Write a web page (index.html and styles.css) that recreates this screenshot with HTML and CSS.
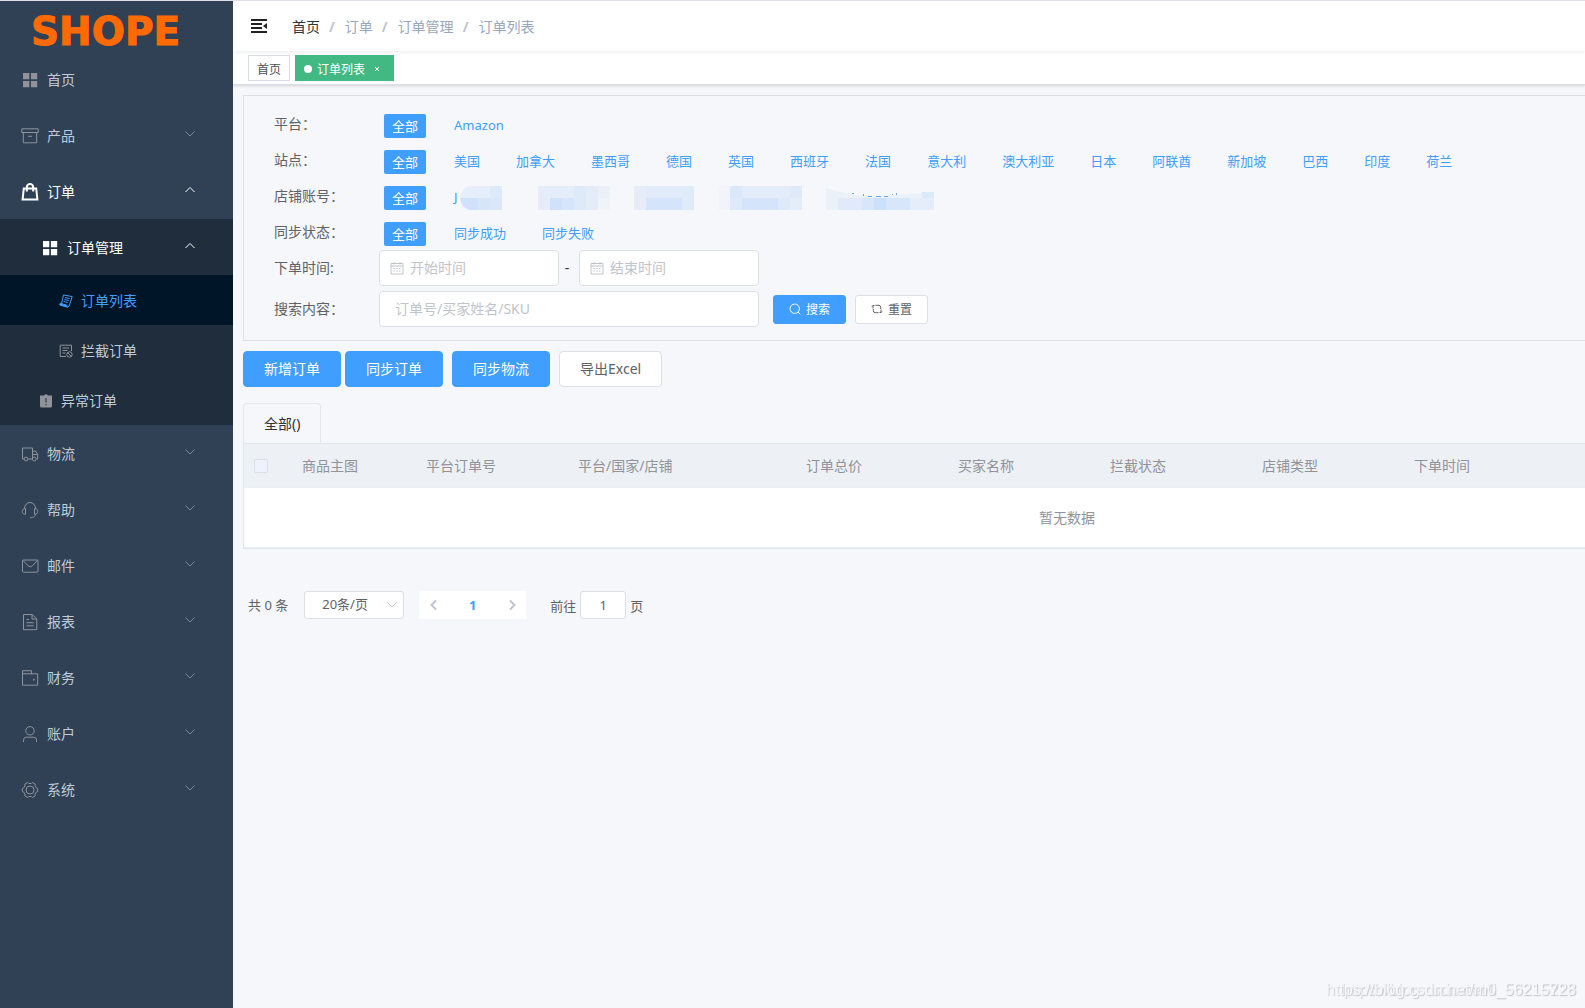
FILE: index.html
```html
<!DOCTYPE html>
<html lang="zh-CN">
<head>
    <meta charset="UTF-8">
    <meta name="viewport" content="width=device-width, initial-scale=1.0">
    <title>订单列表</title>
    <link rel="stylesheet" href="styles.css">
</head>
<body>
    <!-- shared icons -->
    <svg class="sprite" aria-hidden="true">
        <symbol id="down" viewBox="0 0 12 12"><path d="M1.5 3.5 6 8l4.500-4.500"/></symbol>
        <symbol id="up" viewBox="0 0 12 12"><path d="M1.500 8 6 3.500 10.500 8"/></symbol>
        <symbol id="grid" viewBox="0 0 18 18"><path class="solid" d="M2 2h6.300v6.300H2zM9.900 2h6.300v6.300H9.900zM2 9.900h6.300v6.300H2zM9.900 9.900h6.300v6.300H9.900z"/></symbol>
        <symbol id="date" viewBox="0 0 14 14"><path d="M1 2.500h12v10.500H1zM1 5h12M4 1v2.500M10 1v2.500M3.500 7.500h1.500M6.300 7.500h1.500M9 7.500h1.500M3.500 10h1.500M6.300 10h1.500M9 10h1.500"/></symbol>
    </svg>

    <div class="app">
        <aside class="sidebar">
            <a class="logo" href="#">SHOPE</a>
            <nav class="menu">
                <a class="menu-item" href="#"><svg class="icon"><use href="#grid"/></svg>首页</a>
                <button class="menu-item" type="button">
                    <svg class="icon" viewBox="0 0 18 18"><path d="M.8 1.800h16.400v3.700H.8zM2.300 5.500v10.300h13.400V5.500M7 9.300h4"/></svg>产品
                    <svg class="arrow"><use href="#down"/></svg>
                </button>
                <button class="menu-item opened" type="button">
                    <svg class="icon bag" viewBox="0 0 18 18"><path d="M2.800 5.500h12.400l1.200 11H1.600zM5.800 8.500V4.200a3.200 3.200 0 0 1 6.400 0v4.300"/></svg>订单
                    <svg class="arrow"><use href="#up"/></svg>
                </button>
                <div class="submenu">
                    <button class="menu-item opened level-2" type="button">
                        <svg class="icon"><use href="#grid"/></svg>订单管理
                        <svg class="arrow"><use href="#up"/></svg>
                    </button>
                    <a class="menu-item level-3 active" href="#">
                        <svg class="icon small" viewBox="0 0 14 14"><path d="m4.500 1 8.700 1.500-3 9.500-1.800 1.200L.8 11l.5-1.700 1.200.3zM2.500 9.600l5.800 1.800M6 3.500l4.500 1M5.300 5.500l4.500 1M4.600 7.500l4 1"/><path class="solid" d="m.8 9.300 7.500 2.200.1 1.700L.8 11z"/></svg>订单列表
                    </a>
                    <a class="menu-item level-3" href="#">
                        <svg class="icon small" viewBox="0 0 14 14"><path d="M7 12.500H1.200V1.200h11.300v6M3.500 4h6.500M3.500 6.500h5M3.500 9h3"/><circle cx="10.500" cy="10.500" r="2.700"/><path d="m8.600 8.600 3.800 3.800"/></svg>拦截订单
                    </a>
                    <a class="menu-item level-2b" href="#">
                        <svg class="icon small" viewBox="0 0 14 14"><path class="solid" d="M5 1.500Q7-.8 9 1.500h4V12q0 1.500-1.500 1.500h-9Q1 13.500 1 12V1.500z"/><path class="mark" d="M7 4v4.500M7 10v1.300"/></svg>异常订单
                    </a>
                </div>
                <button class="menu-item" type="button">
                    <svg class="icon" viewBox="0 0 18 18"><path d="M3.200 14H1.500V3h10v11H7M11.500 6.200h3.200l2 3.300V14h-1M11.500 9.500h5"/><circle cx="5" cy="14" r="1.900"/><circle cx="13.300" cy="14" r="1.900"/></svg>物流
                    <svg class="arrow"><use href="#down"/></svg>
                </button>
                <button class="menu-item" type="button">
                    <svg class="icon" viewBox="0 0 18 18"><path d="M3.500 7.500a5.500 6 0 0 1 11 0M4.500 7.500v5.800C2.500 13.500 1.300 12.200 1.300 10.400S2.500 7.300 4.500 7.500zM13.500 7.500v5.800c2 .2 3.200-1.100 3.200-2.900s-1.200-3.100-3.200-2.900zM14.500 13c0 2-1.500 3.700-5.500 3.700"/></svg>帮助
                    <svg class="arrow"><use href="#down"/></svg>
                </button>
                <button class="menu-item" type="button">
                    <svg class="icon" viewBox="0 0 18 18"><rect x="1.500" y="3" width="15.500" height="12.200" rx="1"/><path d="M2 3.500 7.300 9q1.900 1.700 3.900 0l5.300-5.500"/></svg>邮件
                    <svg class="arrow"><use href="#down"/></svg>
                </button>
                <button class="menu-item" type="button">
                    <svg class="icon" viewBox="0 0 18 18"><path d="M2.500 1.500h8.700L15.800 6v10.700H2.500zM11 1.500V6h4.800M5.500 6.500H8M5.500 9.700h7.200M5.500 12.800h7.200"/></svg>报表
                    <svg class="arrow"><use href="#down"/></svg>
                </button>
                <button class="menu-item" type="button">
                    <svg class="icon" viewBox="0 0 18 18"><path d="M1.500 4.800h15.200v11.400H1.500V1.700h9v3.100M12.800 9.700v2M12 10.700h1.600"/></svg>财务
                    <svg class="arrow"><use href="#down"/></svg>
                </button>
                <button class="menu-item" type="button">
                    <svg class="icon" viewBox="0 0 18 18"><circle cx="9" cy="5.800" r="4.200"/><path d="M2.500 17v-1.800q0-3 3-3h7q3 0 3 3V17"/></svg>账户
                    <svg class="arrow"><use href="#down"/></svg>
                </button>
                <button class="menu-item" type="button">
                    <svg class="icon" viewBox="0 0 18 18"><path d="m6.700 1.500 1 1h2.600l1-1 3 1.700-.3 1.600 1.200 2 1.500.7v3l-1.500.7-1.200 2 .3 1.600-3 1.700-1-1H7.700l-1 1-3-1.700.3-1.600-1.200-2-1.500-.7v-3l1.500-.7L4 4.800l-.3-1.600z"/><circle cx="9" cy="9" r="4"/></svg>系统
                    <svg class="arrow"><use href="#down"/></svg>
                </button>
            </nav>
        </aside>

        <div class="main">
            <header class="navbar">
                <button class="hamburger" type="button" aria-label="收起菜单">
                    <svg viewBox="0 0 16 14"><path d="M0 1h16M0 5h11M0 9h11M0 13h16"/><path class="solid" d="m16 4v6l-4-3z"/></svg>
                </button>
                <nav class="breadcrumb">
                    <a href="#">首页</a><i>/</i><span>订单</span><i>/</i><span>订单管理</span><i>/</i><span>订单列表</span>
                </nav>
            </header>
            <div class="tags-view">
                <a class="view" href="#">首页</a>
                <a class="view current" href="#"><span class="dot"></span>订单列表<svg class="close" viewBox="0 0 6 6"><path d="m1 1 4 4M5 1 1 5"/></svg></a>
            </div>

            <main class="content">
                <form class="filter">
                    <div class="row">
                        <span class="label">平台：</span>
                        <div class="options"><button class="on" type="button">全部</button><a href="#">Amazon</a></div>
                    </div>
                    <div class="row">
                        <span class="label">站点：</span>
                        <div class="options">
                            <button class="on" type="button">全部</button>
                            <a href="#">美国</a>
                            <a href="#">加拿大</a>
                            <a href="#">墨西哥</a>
                            <a href="#">德国</a>
                            <a href="#">英国</a>
                            <a href="#">西班牙</a>
                            <a href="#">法国</a>
                            <a href="#">意大利</a>
                            <a href="#">澳大利亚</a>
                            <a href="#">日本</a>
                            <a href="#">阿联酋</a>
                            <a href="#">新加坡</a>
                            <a href="#">巴西</a>
                            <a href="#">印度</a>
                            <a href="#">荷兰</a>
                        </div>
                    </div>
                    <div class="row">
                        <span class="label">店铺账号：</span>
                        <div class="options shops">
                            <button class="on" type="button">全部</button>
                            <a class="named" href="#">J<svg width="42" height="24"><path fill="#e5eefa" d="M10 0h20v12H0Q2 2 10 0z"/><path fill="#dceaf9" d="M30 0h12v12H30z"/><path fill="#d0e2fb" d="M0 12h18v12H9Q1 21 0 12z"/><path fill="#d6e6f9" d="M18 12h12v12H18z"/><path fill="#dae7fa" d="M30 12h12v12H30z"/></svg></a>
                            <a href="#" aria-label="店铺2"><svg width="72" height="24"><path fill="#e4edf9" d="M0 0h36v12H0zM0 12h12v12H0z"/><path fill="#dceaf9" d="M36 0h12v12H36zM36 12h12v12H36z"/><path fill="#e4ecf9" d="M48 0h12v24H48z"/><path fill="#ebf0f9" d="M60 0h12v12H60z"/><path fill="#cfe2fc" d="M12 12h12v12H12z"/><path fill="#d6e5fb" d="M24 12h12v12H24z"/><path fill="#f0f4f9" d="M60 12h12v12H60z"/></svg></a>
                            <a href="#" aria-label="店铺3"><svg width="60" height="24"><path fill="#e6edf9" d="M0 0h12v24H0z"/><path fill="#e1ebf9" d="M12 0h36v12H12z"/><path fill="#deebf9" d="M48 0h12v24H48z"/><path fill="#d4e4fb" d="M12 12h36v12H12z"/></svg></a>
                            <a href="#" aria-label="店铺4"><svg width="84" height="24"><path fill="#f1f4fa" d="M0 0h12v24H0z"/><path fill="#d9e9fa" d="M12 0h12v12H12z"/><path fill="#e4ecf9" d="M24 0h48v12H24z"/><path fill="#deeafa" d="M72 0h12v12H72zM12 12h12v12H12zM60 12h12v12H60z"/><path fill="#d4e4fa" d="M24 12h36v12H24z"/><path fill="#e5edf9" d="M72 12h12v12H72z"/></svg></a>
                            <a href="#" aria-label="店铺5"><svg width="108" height="24"><path fill="#ebf1f9" d="M0 2q40 12 70 7l38-3v18H0z"/><path fill="#e0eafa" d="M12 12h24v12H12z"/><path fill="#d7e6fa" d="M36 12h12v12H36zM60 12h24v12H60z"/><path fill="#cbe0fb" d="M48 12h12v12H48z"/><path fill="#e4edf9" d="M84 12h24v12H84z"/><path fill="#d9eaf9" d="M96 6h12v6H96z"/><path fill="#60a9f5" d="M26 7h2v1h-2zM37 8h1v2h-1zM42 10h4v1h-4zM50 10h5v1h-5zM58 10h4v1h-4zM66 8h1v1h-1zM70 7h1v2h-1z"/></svg></a>
                        </div>
                    </div>
                    <div class="row">
                        <span class="label">同步状态：</span>
                        <div class="options"><button class="on" type="button">全部</button><a href="#">同步成功</a><a href="#">同步失败</a></div>
                    </div>
                    <div class="row">
                        <label class="label" for="startTime">下单时间:</label>
                        <div class="input date"><svg><use href="#date"/></svg><input type="text" id="startTime" placeholder="开始时间"></div>
                        <span class="dash">-</span>
                        <div class="input date"><svg><use href="#date"/></svg><input type="text" aria-label="结束时间" placeholder="结束时间"></div>
                    </div>
                    <div class="row search-row">
                        <label class="label" for="keyword">搜索内容：</label>
                        <div class="input keyword"><input type="text" id="keyword" placeholder="订单号/买家姓名/SKU"></div>
                        <button class="btn mini primary" type="button"><svg viewBox="0 0 12 12"><circle cx="5.700" cy="5.700" r="4.700"/><path d="m9 9 2.300 2.300"/></svg>搜索</button>
                        <button class="btn mini" type="button"><svg viewBox="0 0 12 12"><path d="M4.500 2.300h3.200q2 0 2 2V6M2 5.500V2.500M.8 3.500 2 2.300M2.300 6v1.700q0 2 2 2h3.200M10 6.500v3M10 9.700l1.200-1.200M2 2.500h1.500M8.500 9.500H10"/></svg>重置</button>
                    </div>
                </form>

                <div class="actions">
                    <button class="btn primary first" type="button">新增订单</button>
                    <button class="btn primary" type="button">同步订单</button>
                    <button class="btn primary" type="button">同步物流</button>
                    <button class="btn" type="button">导出Excel</button>
                </div>

                <div class="tabs"><button class="tab" type="button">全部()</button></div>
                <table class="orders">
                    <colgroup>
                        <col class="c-check"><col class="c-img"><col class="c-base"><col class="c-wide"><col class="c-base"><col class="c-base"><col class="c-base"><col class="c-base"><col>
                    </colgroup>
                    <thead>
                        <tr>
                            <th class="check"><input type="checkbox" aria-label="全选"></th>
                            <th>商品主图</th>
                            <th>平台订单号</th>
                            <th>平台/国家/店铺</th>
                            <th>订单总价</th>
                            <th>买家名称</th>
                            <th>拦截状态</th>
                            <th>店铺类型</th>
                            <th>下单时间</th>
                        </tr>
                    </thead>
                    <tbody>
                        <tr><td class="empty" colspan="9">暂无数据</td></tr>
                    </tbody>
                </table>

                <div class="pagination">
                    <span class="total">共 0 条</span>
                    <div class="size">
                        <select aria-label="每页条数"><option>20条/页</option></select>
                        <svg><use href="#down"/></svg>
                    </div>
                    <div class="pager">
                        <button type="button" aria-label="上一页"><svg viewBox="0 0 12 12"><path d="M8 1.500 3.500 6 8 10.500"/></svg></button>
                        <button class="num" type="button">1</button>
                        <button type="button" aria-label="下一页"><svg viewBox="0 0 12 12"><path d="M4 1.500 8.500 6 4 10.500"/></svg></button>
                    </div>
                    <label class="jump">前往<input type="text" value="1">页</label>
                </div>
            </main>
        </div>
    </div>

    <div class="watermark">
        <span>https://blog.csdn.net/li_56215228</span>
        <span>https://blog.csdn.net/m0_56215728</span>
    </div>
</body>
</html>
```
FILE: styles.css
```css
* {
    box-sizing: border-box;
}

body {
    margin: 0;
    font-family: "Noto Sans", "Noto Sans CJK SC", sans-serif;
    font-size: 14px;
    color: #606266;
    background: #f5f7fb;
}

a {
    color: inherit;
    text-decoration: none;
}

button, input, select {
    font-family: inherit;
    font-size: inherit;
    color: inherit;
    margin: 0;
}

button {
    cursor: pointer;
}

svg {
    fill: none;
    stroke: currentColor;
    flex: none;
}

.sprite {
    display: none;
}

.solid {
    fill: currentColor;
    stroke: none;
}

.app {
    display: flex;
    min-height: 100vh;
    border-top: 1px solid #dcdfe6;
}

/* sidebar */
.sidebar {
    flex: none;
    width: 233px;
    background: #304156;
}

.logo {
    display: block;
    height: 50px;
    padding-left: 31px;
    font-family: "DejaVu Sans", sans-serif;
    font-size: 39px;
    font-weight: 700;
    line-height: 62px;
    color: #ff6a00;
    -webkit-text-stroke: 1px #ff6a00;
}

.menu-item {
    display: flex;
    align-items: center;
    width: 100%;
    height: 56px;
    padding: 0 37px 0 21px;
    border: 0;
    background: none;
    color: #bfcbd9;
    text-align: left;
}

.icon {
    width: 18px;
    height: 18px;
    margin: 2px 8px 0 0;
    color: #909399;
}

.icon.small {
    width: 14px;
    height: 14px;
}

.arrow {
    width: 12px;
    height: 12px;
    margin: 0 0 2px auto;
    color: #7f8792;
}

.opened, .opened .icon, .opened .arrow {
    color: #fff;
}

.bag {
    stroke-width: 2;
}

.submenu {
    background: #1f2d3d;
}

.level-2 {
    padding-left: 41px;
}

.level-2b, .level-3 {
    height: 50px;
    padding-left: 59px;
}

.level-2b {
    padding-left: 39px;
}

.active {
    background: #001528;
}

.active, .active .icon {
    color: #409eff;
}

.mark {
    stroke: #1f2d3d;
}

/* top bars */
.main {
    flex: 1;
    min-width: 0;
    overflow: hidden;
}

.navbar {
    display: flex;
    align-items: center;
    height: 50px;
    padding: 0 18px;
    background: #fff;
    box-shadow: 0 1px 4px rgba(0, 21, 41, .08);
    position: relative;
}

.hamburger {
    display: flex;
    padding: 0;
    border: 0;
    background: none;
    color: #222;
}

.hamburger svg {
    width: 16px;
    height: 14px;
    stroke-width: 2;
}

.breadcrumb {
    margin-left: 25px;
    color: #97a8be;
}

.breadcrumb a {
    color: #303133;
}

.breadcrumb i {
    margin: 0 10px 0 9px;
    font-style: normal;
    font-weight: 700;
    color: #c0c4cc;
}

.tags-view {
    display: flex;
    gap: 5px;
    height: 34px;
    padding: 4px 15px;
    background: #fff;
    border-bottom: 1px solid #d8dce5;
    box-shadow: 0 1px 3px rgba(0, 0, 0, .14);
}

.view {
    display: flex;
    align-items: center;
    height: 26px;
    padding: 2px 8px 0;
    border: 1px solid #d8dce5;
    font-size: 12px;
    color: #495060;
}

.current {
    padding-right: 13px;
    background: #42b983;
    border-color: #42b983;
    color: #fff;
}

.dot {
    width: 8px;
    height: 8px;
    margin-right: 5px;
    border-radius: 50%;
    background: #fff;
}

.close {
    width: 6px;
    height: 6px;
    margin-left: 9px;
}

.content {
    min-width: 1668px;
    padding: 10px;
}

.filter {
    padding: 10px 30px 13px;
    border: 1px solid #dcdfe6;
}

.row {
    display: flex;
    height: 36px;
}

.label {
    width: 105px;
    line-height: 36px;
}

.options {
    display: flex;
    gap: 20px;
    padding: 8px 0 0 5px;
    font-size: 13px;
    line-height: 22px;
    color: #409eff;
}

.options a, .options .on {
    display: block;
    height: 24px;
    padding: 0 8px;
}

.options .on {
    padding-bottom: 2px;
    border: 0;
    border-radius: 2px;
    background: #409eff;
    color: #fff;
}

.shops {
    gap: 8px;
}

.shops a svg {
    display: block;
    stroke: none;
}

.shops .named {
    display: flex;
    gap: 2px;
    margin: 0 12px;
}

.input {
    display: flex;
    align-items: center;
    width: 180px;
    height: 36px;
    border: 1px solid #dcdfe6;
    border-radius: 4px;
    background: #fff;
    color: #c0c4cc;
}

.input svg {
    width: 14px;
    height: 14px;
    margin: 0 6px 0 10px;
}

.input input {
    flex: 1;
    min-width: 0;
    padding: 0 0 2px;
    border: 0;
    outline: 0;
    background: none;
    color: #606266;
}

.input input::placeholder {
    color: #c0c4cc;
}

.dash {
    width: 20px;
    padding-right: 4px;
    text-align: center;
    line-height: 36px;
    color: #303133;
}

.search-row {
    align-items: center;
    margin-top: 5px;
}

.keyword {
    width: 380px;
    padding-left: 15px;
}

.btn {
    height: 36px;
    padding: 0 20px 2px;
    border: 1px solid #dcdfe6;
    border-radius: 4px;
    background: #fff;
}

.primary {
    border-color: #409eff;
    background: #409eff;
    color: #fff;
}

.mini {
    display: flex;
    align-items: center;
    gap: 5px;
    height: 29px;
    margin-left: 9px;
    padding: 0 15px;
    border-radius: 3px;
    font-size: 12px;
}

.mini.primary {
    margin-left: 14px;
}

.mini svg {
    width: 12px;
    height: 12px;
}

.actions {
    display: flex;
    gap: 9px;
    margin: 10px 0 16px;
}

.actions .first {
    margin-right: -5px;
}

/* order table */
.tabs {
    display: flex;
}

.tab {
    height: 40px;
    padding: 0 20px 2px;
    border: 1px solid #e4e7ed;
    border-bottom: 0;
    border-radius: 4px 4px 0 0;
    background: none;
    color: #303133;
}

.orders {
    width: 100%;
    table-layout: fixed;
    border-collapse: separate;
    border-spacing: 0;
    border: 1px solid #dfe6ec;
    background: #fff;
    color: #909399;
}

.c-check {
    width: 48px;
}

.c-img {
    width: 124px;
}

.c-base {
    width: 152px;
}

.c-wide {
    width: 228px;
}

.orders th {
    height: 44px;
    padding: 0 10px 2px;
    border-bottom: 1px solid #ebeef5;
    background: #edf0f5;
    font-weight: 400;
    text-align: left;
}

.orders .check {
    padding-bottom: 0;
}

.orders input {
    display: block;
    appearance: none;
    width: 14px;
    height: 14px;
    border: 1px solid #dcdfe6;
    border-radius: 2px;
    background: #edf2fc;
}

.orders .empty {
    height: 60px;
    padding: 0 0 2px;
    border-bottom: 1px solid #ebeef5;
    text-align: center;
}

/* pagination */
.pagination {
    display: flex;
    align-items: center;
    margin-top: 42px;
    padding-left: 5px;
    font-size: 13px;
}

.total {
    padding-bottom: 2px;
}

.size {
    position: relative;
    margin: 0 15px 0 16px;
}

.size select {
    appearance: none;
    width: 100px;
    height: 28px;
    padding: 0 25px 2px 17px;
    border: 1px solid #dcdfe6;
    border-radius: 3px;
    background: #fff;
}

.size svg {
    position: absolute;
    top: 8px;
    right: 6px;
    width: 12px;
    height: 12px;
    color: #c0c4cc;
    pointer-events: none;
}

.pager {
    display: flex;
    background: #fff;
}

.pager button {
    display: flex;
    align-items: center;
    justify-content: center;
    width: 29px;
    height: 28px;
    padding: 0;
    border: 0;
    background: none;
    color: #c0c4cc;
}

.pager svg {
    width: 12px;
    height: 12px;
    stroke-width: 2;
}

.pager .num {
    width: 49px;
    font-weight: 700;
    color: #409eff;
}

.jump {
    display: flex;
    align-items: center;
    gap: 4px;
    margin-left: 24px;
}

.jump input {
    width: 46px;
    height: 28px;
    padding: 0;
    border: 1px solid #dcdfe6;
    border-radius: 3px;
    background: #fff;
    text-align: center;
}

.watermark {
    display: grid;
    position: fixed;
    right: 9px;
    bottom: 9px;
    font-family: "Liberation Sans", Arial, sans-serif;
    font-size: 16px;
    line-height: 18px;
    color: #f5f7fb;
    text-align: right;
    text-shadow: 1px 1px 1px #ccc;
    pointer-events: none;
}

.watermark span {
    grid-area: 1 / 1;
}
```
